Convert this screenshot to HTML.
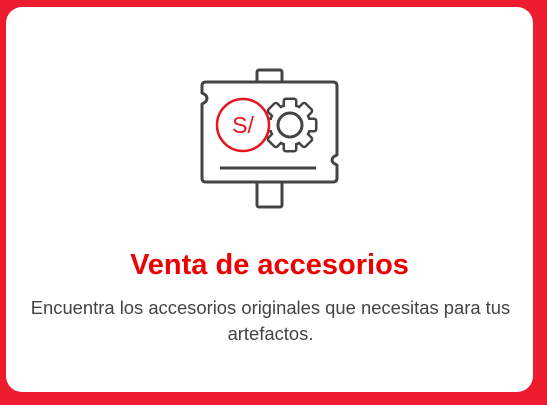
<!DOCTYPE html>
<html><head><style>
html,body{margin:0;padding:0;width:547px;height:405px;overflow:hidden;background:#ec1b2e;}
.card{position:absolute;left:6px;top:7px;width:527px;height:385px;background:#fff;border-radius:16px;}
h1{position:absolute;left:0;top:249px;width:539px;margin:0;text-align:center;font:bold 29px "Liberation Sans",sans-serif;color:#ee0000;}
p{position:absolute;left:0;top:295px;width:541px;margin:0;text-align:center;font:18.4px/26px "Liberation Sans",sans-serif;color:#444;}
svg{position:absolute;left:0;top:0;}
</style></head><body>
<div class="card"></div>
<svg width="547" height="405" viewBox="0 0 547 405">
<g fill="none" stroke="#444" stroke-width="3" stroke-linejoin="round">
<rect x="257" y="70" width="25" height="14" rx="2"/>
<rect x="257" y="181" width="25" height="26" rx="2"/>
<path d="M206 82 H333 Q337 82 337 86 V155 Q332 157 332 160 Q332 163 337 165 V178 Q337 182 333 182 H206 Q202 182 202 178 V104 Q207 102 207 98 Q207 95 202 93 V86 Q202 82 206 82 Z" fill="#fff"/>
<line x1="220" y1="168" x2="316" y2="168"/>
</g>
<g transform="translate(290 125)">
<g stroke="#444" stroke-width="5" fill="#444">
<circle r="19"/>
<rect x="-5" y="-25" width="10" height="10" rx="1"/>
<rect x="-5" y="-25" width="10" height="10" rx="1" transform="rotate(45)"/>
<rect x="-5" y="-25" width="10" height="10" rx="1" transform="rotate(90)"/>
<rect x="-5" y="-25" width="10" height="10" rx="1" transform="rotate(135)"/>
<rect x="-5" y="-25" width="10" height="10" rx="1" transform="rotate(180)"/>
<rect x="-5" y="-25" width="10" height="10" rx="1" transform="rotate(225)"/>
<rect x="-5" y="-25" width="10" height="10" rx="1" transform="rotate(270)"/>
<rect x="-5" y="-25" width="10" height="10" rx="1" transform="rotate(315)"/>
</g>
<g fill="#fff">
<circle r="19"/>
<rect x="-5" y="-25" width="10" height="10" rx="1"/>
<rect x="-5" y="-25" width="10" height="10" rx="1" transform="rotate(45)"/>
<rect x="-5" y="-25" width="10" height="10" rx="1" transform="rotate(90)"/>
<rect x="-5" y="-25" width="10" height="10" rx="1" transform="rotate(135)"/>
<rect x="-5" y="-25" width="10" height="10" rx="1" transform="rotate(180)"/>
<rect x="-5" y="-25" width="10" height="10" rx="1" transform="rotate(225)"/>
<rect x="-5" y="-25" width="10" height="10" rx="1" transform="rotate(270)"/>
<rect x="-5" y="-25" width="10" height="10" rx="1" transform="rotate(315)"/>
</g>
<circle r="12" fill="none" stroke="#444" stroke-width="3"/>
</g>
<circle cx="243" cy="125" r="26" fill="#fff" stroke="#e8141f" stroke-width="2.5"/>
<text x="243" y="133" text-anchor="middle" font-family="Liberation Sans,sans-serif" font-size="23" fill="#e8141f">S/</text>
</svg>
<h1>Venta de accesorios</h1>
<p>Encuentra los accesorios originales que necesitas para tus<br>artefactos.</p>
</body></html>
